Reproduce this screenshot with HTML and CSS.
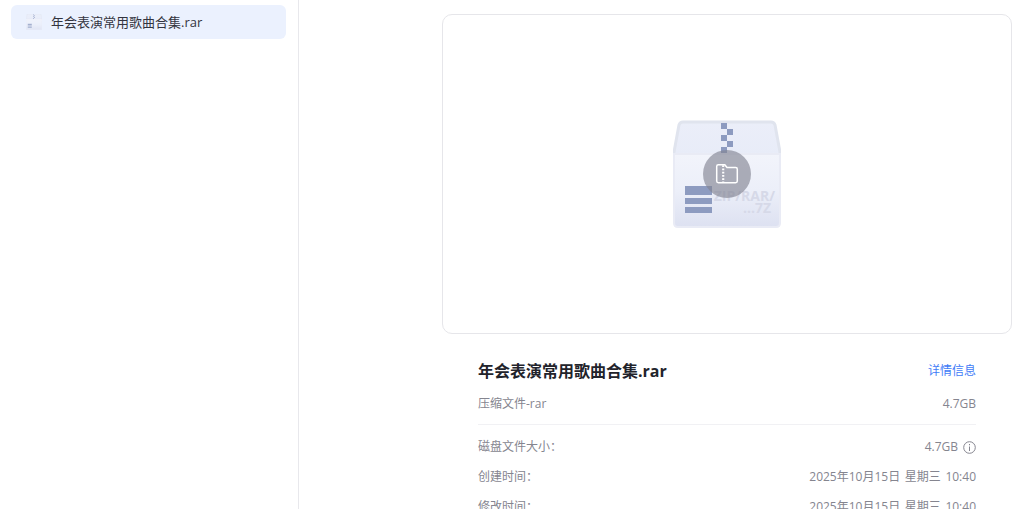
FILE: index.html
```html
<!DOCTYPE html>
<html lang="zh-CN">
<head>
<meta charset="utf-8">
<title>年会表演常用歌曲合集.rar</title>
<link rel="stylesheet" href="styles.css">
</head>
<body>
<div class="app">
  <aside class="sidebar">
    <div class="file-row">
      <svg class="file-icon" width="16" height="16" viewBox="0 0 108 108">
        <use href="#box"/>
      </svg>
      <span class="file-name">年会表演常用歌曲合集.rar</span>
    </div>
  </aside>
  <main class="detail">
    <div class="preview">
      <div class="box-wrap">
        <svg class="box" width="108" height="108" viewBox="0 0 108 108">
          <defs>
            <linearGradient id="bodyGrad" x1="0" y1="0" x2="0" y2="1">
              <stop offset="0" stop-color="#f2f4fb"/>
              <stop offset="0.5" stop-color="#eceff9"/>
              <stop offset="1" stop-color="#dde1f1"/>
            </linearGradient>
            <linearGradient id="lidGrad" x1="0" y1="0" x2="0" y2="1">
              <stop offset="0" stop-color="#ebeef9"/>
              <stop offset="1" stop-color="#e8ecf8"/>
            </linearGradient>
            <g id="box">
              <path d="M10 2 H98 Q101 2 102 5 L107 32 V35 H1 V32 L6 5 Q7 2 10 2 Z" fill="url(#lidGrad)" stroke="#e0e4ee" stroke-width="3"/>
              <path d="M1 34 H107 V103 Q107 107 103 107 H5 Q1 107 1 103 Z" fill="url(#bodyGrad)" stroke="#e9ebf5" stroke-width="2"/>
              <g fill="#8d9bc0">
                <rect x="48" y="3" width="6" height="6"/>
                <rect x="54" y="9" width="6" height="6"/>
                <rect x="48" y="15" width="6" height="6"/>
                <rect x="54" y="21" width="6" height="6"/>
                <rect x="48" y="27" width="6" height="6"/>
                <rect x="12" y="66" width="27" height="9"/>
                <rect x="12" y="78" width="27" height="6"/>
                <rect x="12" y="87" width="27" height="6"/>
              </g>
            </g>
          </defs>
          <use href="#box"/>
          <text class="box-label" x="102" y="81" text-anchor="end">ZIP/RAR/</text>
          <text class="box-label" x="98" y="93" text-anchor="end">...7Z</text>
        </svg>
        <div class="badge">
          <svg width="26" height="26" viewBox="0 0 24 24" fill="none" stroke="#fff" stroke-width="1.400">
            <path d="M2.500 5 Q2.500 3.500 4 3.500 H10 L12 6 H20 Q21.500 6 21.500 7.500 V18.500 Q21.500 20 20 20 H4 Q2.500 20 2.500 18.500 Z" stroke-linejoin="round"/>
            <path d="M8.500 4 V20" stroke-width="2" stroke-dasharray="1.500 1.500"/>
          </svg>
        </div>
      </div>
    </div>
    <section class="info">
      <div class="title-row">
        <h1 class="title">年会表演常用歌曲合集.rar</h1>
        <a class="link">详情信息</a>
      </div>
      <div class="row summary">
        <span>压缩文件-rar</span>
        <span>4.7GB</span>
      </div>
      <div class="props">
        <div class="row">
          <span>磁盘文件大小：</span>
          <span class="with-icon">4.7GB
            <svg width="13" height="13" viewBox="0 0 13 13" fill="none" stroke="#85858f">
              <circle cx="6.500" cy="6.500" r="5.800"/>
              <path d="M6.500 5.500 V10 M6.500 3 V4.300"/>
            </svg>
          </span>
        </div>
        <div class="row">
          <span>创建时间：</span>
          <span>2025年10月15日 星期三 10:40</span>
        </div>
        <div class="row">
          <span>修改时间：</span>
          <span>2025年10月15日 星期三 10:40</span>
        </div>
      </div>
    </section>
  </main>
</div>
</body>
</html>
```
FILE: styles.css
```css
* { box-sizing: border-box; }
html, body {
  margin: 0;
  height: 100%;
  overflow: hidden;
  background: #fff;
  font-family: "Open Sans", "Noto Sans CJK SC", sans-serif;
}
.app {
  display: flex;
  height: 509px;
}
.sidebar {
  width: 299px;
  flex: none;
  padding: 5px 12px 0 11px;
  border-right: 1px solid #e8e8ec;
}
.file-row {
  display: flex;
  align-items: center;
  gap: 9px;
  height: 34px;
  padding: 0 0 0 15px;
  border-radius: 6px;
  background: #ebf1fe;
}
.file-icon {
  flex: none;
  opacity: 0.75;
}
.file-name {
  font-size: 13px;
  line-height: 18px;
  color: #33343e;
}
.detail {
  flex: 1;
  padding: 14px 18px 0 143px;
  min-width: 0;
}
.preview {
  display: flex;
  align-items: center;
  justify-content: center;
  height: 320px;
  border: 1px solid #e6e6ea;
  border-radius: 10px;
}
.box-wrap {
  position: relative;
  width: 108px;
  height: 108px;
}
.box { display: block; }
.box-label {
  font-family: "Open Sans", sans-serif;
  font-size: 14px;
  font-weight: 700;
  fill: #d6d9e8;
}
.badge {
  position: absolute;
  left: 30px;
  top: 30px;
  width: 48px;
  height: 48px;
  border-radius: 50%;
  background: rgba(130, 132, 146, 0.64);
  display: flex;
  align-items: center;
  justify-content: center;
}
.info {
  padding: 0 36px;
}
.title-row {
  display: flex;
  align-items: center;
  justify-content: space-between;
  margin-top: 25px;
  height: 24px;
}
.title {
  margin: 0;
  font-size: 16px;
  line-height: 22px;
  font-weight: 700;
  color: #22232b;
}
.link {
  font-size: 12px;
  line-height: 18px;
  color: #3f7cf7;
}
.row {
  display: flex;
  align-items: center;
  justify-content: space-between;
  font-size: 12px;
  line-height: 18px;
  word-spacing: 1.500px;
  color: #85858f;
  height: 20px;
}
.summary {
  margin-top: 11px;
}
.props {
  margin-top: 10px;
  padding-top: 12px;
  border-top: 1px solid #f1f1f4;
  display: flex;
  flex-direction: column;
  gap: 10px;
}
.with-icon {
  display: flex;
  align-items: center;
  gap: 5px;
}
```
